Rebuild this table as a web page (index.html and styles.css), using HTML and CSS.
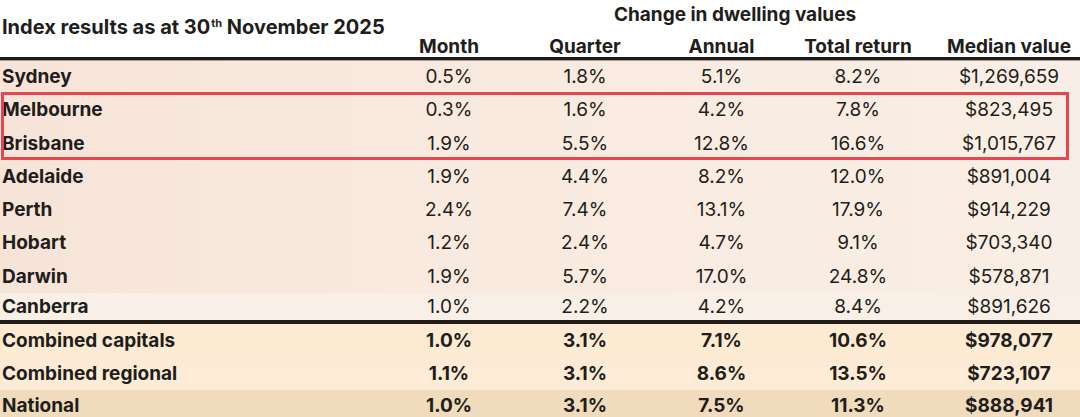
FILE: index.html
```html
<!DOCTYPE html>
<html lang="en">
<head>
<meta charset="utf-8">
<title>Index results</title>
<link rel="stylesheet" href="styles.css">
</head>
<body>
<div class="sheet">
  <div class="head">
    <div class="title">Index results as at 30<sup class="sup">th</sup> November 2025</div>
    <div class="group">Change in dwelling values</div>
    <div class="ch">Month</div>
    <div class="ch">Quarter</div>
    <div class="ch">Annual</div>
    <div class="ch">Total return</div>
    <div class="ch med">Median value</div>
  </div>

  <div class="rows">
    <div class="row"><span class="name">Sydney</span><span class="v">0.5%</span><span class="v">1.8%</span><span class="v">5.1%</span><span class="v">8.2%</span><span class="v med">$1,269,659</span></div>
    <div class="row"><span class="name">Melbourne</span><span class="v">0.3%</span><span class="v">1.6%</span><span class="v">4.2%</span><span class="v">7.8%</span><span class="v med">$823,495</span></div>
    <div class="row"><span class="name">Brisbane</span><span class="v">1.9%</span><span class="v">5.5%</span><span class="v">12.8%</span><span class="v">16.6%</span><span class="v med">$1,015,767</span></div>
    <div class="row"><span class="name">Adelaide</span><span class="v">1.9%</span><span class="v">4.4%</span><span class="v">8.2%</span><span class="v">12.0%</span><span class="v med">$891,004</span></div>
    <div class="row"><span class="name">Perth</span><span class="v">2.4%</span><span class="v">7.4%</span><span class="v">13.1%</span><span class="v">17.9%</span><span class="v med">$914,229</span></div>
    <div class="row"><span class="name">Hobart</span><span class="v">1.2%</span><span class="v">2.4%</span><span class="v">4.7%</span><span class="v">9.1%</span><span class="v med">$703,340</span></div>
    <div class="row"><span class="name">Darwin</span><span class="v">1.9%</span><span class="v">5.7%</span><span class="v">17.0%</span><span class="v">24.8%</span><span class="v med">$578,871</span></div>
    <div class="row last"><span class="name">Canberra</span><span class="v">1.0%</span><span class="v">2.2%</span><span class="v">4.2%</span><span class="v">8.4%</span><span class="v med">$891,626</span></div>
    <div class="highlight"></div>
  </div>

  <div class="totals">
    <div class="row tot"><span class="name">Combined capitals</span><span class="v">1.0%</span><span class="v">3.1%</span><span class="v">7.1%</span><span class="v">10.6%</span><span class="v med">$978,077</span></div>
    <div class="row tot"><span class="name">Combined regional</span><span class="v">1.1%</span><span class="v">3.1%</span><span class="v">8.6%</span><span class="v">13.5%</span><span class="v med">$723,107</span></div>
    <div class="row tot national"><span class="name">National</span><span class="v">1.0%</span><span class="v">3.1%</span><span class="v">7.5%</span><span class="v">11.3%</span><span class="v med">$888,941</span></div>
  </div>
</div>
</body>
</html>
```

FILE: styles.css
```css
* { box-sizing: border-box; }

html, body {
  margin: 0;
  padding: 0;
  background: #ffffff;
}

body {
  font-family: Inter, "Noto Sans", "Liberation Sans", sans-serif;
  font-size: 19px;
  color: #211d1a;
  width: 1080px;
  height: 417px;
  overflow: hidden;
}

.sheet {
  width: 1080px;
}

.head,
.row {
  display: grid;
  grid-template-columns: 381px 136px 136px 137px 136px 154px;
}

.head {
  grid-template-rows: 29px 27px;
  height: 60px;
  border-bottom: 3px solid #1e1a17;
  box-shadow: 0 1px 0 #a59d96;
  position: relative;
  z-index: 1;
}

.title {
  grid-column: 1;
  grid-row: 1 / 3;
  align-self: center;
  padding-left: 2px;
  font-size: 20px;
  font-weight: 700;
  line-height: 22px;
  white-space: nowrap;
}

.sup {
  font-size: 11px;
  vertical-align: 0;
  position: relative;
  top: -7px;
  margin-left: 1px;
  font-weight: 700;
}

.group {
  grid-column: 3 / 6;
  grid-row: 1;
  text-align: center;
  padding-left: 27px;
  font-weight: 700;
  line-height: 29px;
  white-space: nowrap;
}

.ch {
  grid-row: 2;
  text-align: center;
  font-weight: 700;
  line-height: 21px;
  padding-top: 7px;
  white-space: nowrap;
}

.ch:nth-of-type(3) { grid-column: 2; }
.ch:nth-of-type(4) { grid-column: 3; }
.ch:nth-of-type(5) { grid-column: 4; }
.ch:nth-of-type(6) { grid-column: 5; }
.ch:nth-of-type(7) { grid-column: 6; }

.med {
  padding-left: 12px;
}

.rows {
  position: relative;
  background: linear-gradient(90deg, #f7e4d8 0%, #f9eadf 45%, #f9eee5 100%);
}

.row {
  height: 33.25px;
  align-items: center;
}

.row.last {
  height: 27.25px;
  background: #f8efe6;
}

.name {
  padding-left: 2px;
  font-weight: 700;
  white-space: nowrap;
}

.v {
  text-align: center;
  font-weight: 400;
  white-space: nowrap;
}

.totals {
  border-top: 4px solid #221d17;
  background: linear-gradient(180deg, #fdead2 0%, #fcecd8 100%);
}

.row.tot {
  height: 33px;
}

.row.tot .v {
  font-weight: 700;
}

.row.national {
  background: #f0dbbd;
  padding-bottom: 3px;
}

.highlight {
  position: absolute;
  left: 1px;
  top: 32px;
  width: 1068px;
  height: 68px;
  border: 3px solid #e8464e;
  pointer-events: none;
}
```
